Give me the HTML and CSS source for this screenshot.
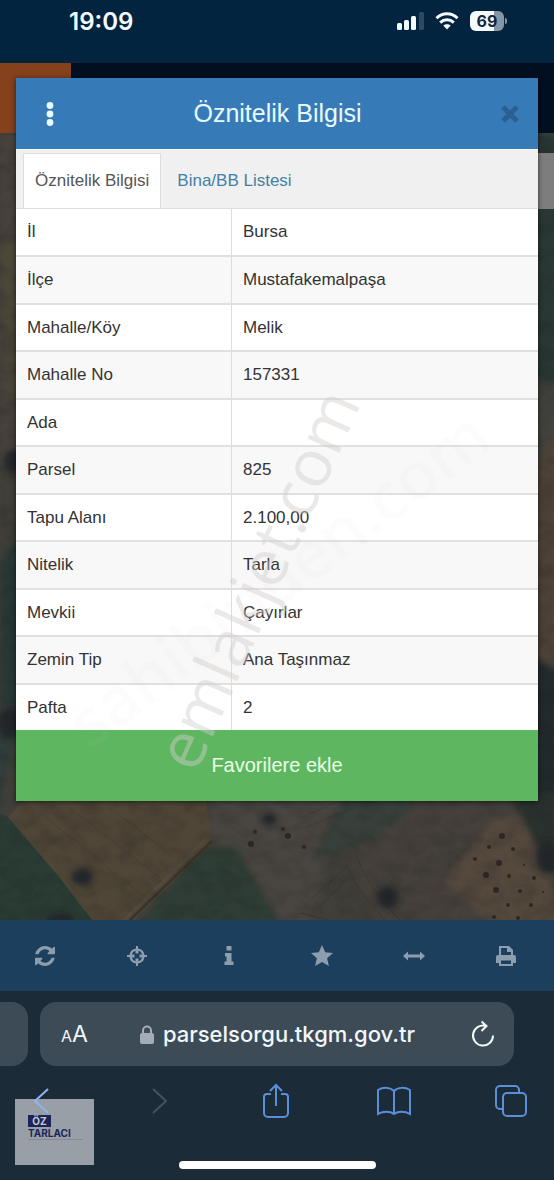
FILE: index.html
```html
<!DOCTYPE html>
<html lang="tr">
<head>
  <meta charset="UTF-8">
  <meta name="viewport" content="width=device-width, initial-scale=1">
  <title>Parsel Sorgu</title>
  <link rel="stylesheet" href="styles.css">
</head>
<body>
<div class="status">
  <span class="clock">19:09</span>
  <div class="status-icons">
    <svg width="27" height="18" viewBox="0 0 27 18">
      <g fill="#f4fbff">
        <rect x="0" y="11" width="5" height="7" rx="1.5"/>
        <rect x="7" y="8" width="5" height="10" rx="1.5"/>
        <rect x="14" y="4" width="5" height="14" rx="1.5"/>
      </g>
      <rect x="22" y="0" width="5" height="18" rx="1.5" fill="#2d4a60"/>
    </svg>
    <svg width="24" height="18" viewBox="0 0 24 18" fill="none" stroke="#f4fbff">
      <path d="M1.5 6.2C7.3.4 16.7.4 22.5 6.2" stroke-width="3"/>
      <path d="M5.2 10.6C9.2 6.9 14.8 6.9 18.8 10.6" stroke-width="3"/>
      <path d="M8.3 13.6C10.4 11.7 13.6 11.7 15.7 13.6L12 17.6Z" fill="#f4fbff" stroke="none"/>
    </svg>
    <div class="battery"><span>69</span></div>
  </div>
</div>

<div class="stage">
  <svg class="map" viewBox="0 0 554 857" preserveAspectRatio="xMidYMax slice" aria-hidden="true">
    <defs>
      <filter id="soft"><feGaussianBlur stdDeviation="3"/></filter>
      <filter id="soil" x="0" y="0" width="100%" height="100%" color-interpolation-filters="sRGB">
        <feTurbulence type="fractalNoise" baseFrequency="0.05 0.07" numOctaves="4" seed="7"/>
        <feColorMatrix values="0 0 0 0 0.12  0 0 0 0 0.12  0 0 0 0 0.12  1.6 0 0 0 -0.6"/>
      </filter>
    </defs>
    <rect width="554" height="857" fill="#413f39"/>
    <g filter="url(#soft)">
      <!-- left edge -->
      <path d="M0 70H20V400H0Z" fill="#48433b"/>
      <path d="M0 180H20V400L8 300Z" fill="#4d4739"/>
      <path d="M0 410L20 405V650L0 640Z" fill="#283735"/>
      <path d="M0 400L20 400V470L0 500Z" fill="#3f4038"/>
      <!-- right edge -->
      <path d="M530 70H560V320H530Z" fill="#2a3836"/>
      <path d="M530 330H560V380L530 400Z" fill="#43433e"/>
      <path d="M530 420L560 360V600H530Z" fill="#4d4337"/>
      <path d="M530 590L560 610V760H530Z" fill="#23292e"/>
      <path d="M0 655L16 668L-5 760Z" fill="#2e3e3a"/>
      <!-- fields under the dialog -->
      <path d="M212 730H350L330 800L310 860H280L240 790L205 776Z" fill="#484540"/>
      <path d="M420 730H345L310 800L400 765Z" fill="#37413b"/>
      <path d="M430 730H510L480 860H380L350 795Z" fill="#45413a"/>
      <path d="M495 755L525 750L548 800L560 860H490L445 818Z" fill="#54483e"/>
      <path d="M508 730H560V815L545 800Z" fill="#29332f"/>
      <path d="M200 788L235 782L262 830L282 862H138Z" fill="#2d3d36"/>
    </g>
    <path d="M0 750L8 754L60 815L92 857H0Z" fill="#2a3c34"/>
    <path d="M8 754L30 730H205L212 780L134 857H92L60 815Z" fill="#4f4637"/>
    <path d="M212 778L130 857" stroke="#3a352c" stroke-width="3"/>
    <path d="M206 776L124 857" stroke="#564c3e" stroke-width="2"/>
    <g fill="none" stroke="#35322c" stroke-opacity=".6">
      <path d="M310 838L350 800M318 845L345 817M300 850L330 857M345 800Q362 835 385 857M355 790Q370 830 400 857"/>
      <path d="M40 750L140 830M70 745L160 815M110 745L175 795M300 755L340 738M305 765L370 738" stroke-opacity=".3"/>
    </g>
    <g fill="#20252b" filter="url(#soft)">
      <ellipse cx="10" cy="660" rx="13" ry="16"/>
      <ellipse cx="82" cy="814" rx="11" ry="8"/>
      <ellipse cx="388" cy="834" rx="11" ry="11"/>
      <ellipse cx="548" cy="795" rx="12" ry="16"/>
      <ellipse cx="60" cy="856" rx="15" ry="6"/>
      <ellipse cx="269" cy="756" rx="7" ry="6"/>
      <ellipse cx="14" cy="398" rx="10" ry="12"/>
    </g>
    <g fill="#302725">
      <circle cx="502" cy="773" r="3"/><circle cx="489" cy="784" r="2"/><circle cx="513" cy="786" r="2"/>
      <circle cx="475" cy="796" r="2"/><circle cx="499" cy="800" r="3"/><circle cx="524" cy="802" r="1"/>
      <circle cx="486" cy="812" r="3"/><circle cx="509" cy="813" r="2"/><circle cx="534" cy="815" r="2"/>
      <circle cx="496" cy="827" r="3"/><circle cx="520" cy="828" r="2"/><circle cx="508" cy="842" r="2"/>
      <circle cx="531" cy="842" r="2"/><circle cx="543" cy="829" r="1"/><circle cx="494" cy="854" r="2"/>
      <circle cx="518" cy="855" r="2"/><circle cx="255" cy="769" r="2"/><circle cx="283" cy="766" r="2"/>
      <circle cx="288" cy="773" r="3"/><circle cx="251" cy="781" r="3"/><circle cx="304" cy="784" r="2"/>
    </g>
    <rect width="554" height="857" filter="url(#soil)" opacity=".3"/>
  </svg>
  <div class="site-head"></div>
  <div class="site-search"></div>

  <div class="dialog" role="dialog" aria-labelledby="dialog-title">
    <div class="dialog-head">
      <button type="button" class="menu" aria-label="Menü">
        <svg width="8" height="24" viewBox="0 0 8 24" fill="#e8fbff">
          <circle cx="4" cy="3.5" r="3.4"/><circle cx="4" cy="12" r="3.4"/><circle cx="4" cy="20.5" r="3.4"/>
        </svg>
      </button>
      <h1 id="dialog-title">Öznitelik Bilgisi</h1>
      <button type="button" class="close" aria-label="Kapat">
        <svg width="18" height="18" viewBox="0 0 18 18" stroke="#2b5f92" stroke-width="5">
          <path d="M2 2L16 16M16 2L2 16"/>
        </svg>
      </button>
    </div>
    <div class="tabs">
      <a href="#oznitelik" class="active">Öznitelik Bilgisi</a>
      <a href="#bina">Bina/BB Listesi</a>
    </div>
    <table class="info" id="oznitelik">
      <tr><th scope="row">İl</th><td>Bursa</td></tr>
      <tr><th scope="row">İlçe</th><td>Mustafakemalpaşa</td></tr>
      <tr><th scope="row">Mahalle/Köy</th><td>Melik</td></tr>
      <tr><th scope="row">Mahalle No</th><td>157331</td></tr>
      <tr><th scope="row">Ada</th><td></td></tr>
      <tr><th scope="row">Parsel</th><td>825</td></tr>
      <tr><th scope="row">Tapu Alanı</th><td>2.100,00</td></tr>
      <tr><th scope="row">Nitelik</th><td>Tarla</td></tr>
      <tr><th scope="row">Mevkii</th><td>Çayırlar</td></tr>
      <tr><th scope="row">Zemin Tip</th><td>Ana Taşınmaz</td></tr>
      <tr><th scope="row">Pafta</th><td>2</td></tr>
    </table>
    <button type="button" class="favorite">Favorilere ekle</button>
    <svg class="watermark" viewBox="0 0 522 722" aria-hidden="true">
      <text class="mark-main" transform="translate(180 696) rotate(-66)">emlakjet.com</text>
      <text class="mark-faint" transform="translate(74 672) rotate(-37)">sahibinden.com</text>
    </svg>
  </div>
</div>

<div class="toolbar">
  <button type="button" aria-label="Yenile">
    <svg width="20" height="20" viewBox="0 0 1536 1536"><path d="M1511 928q0 5-1 7-64 268-268 434.500T764 1536q-146 0-282.500-55T238 1324l-129 129q-19 19-45 19t-45-19-19-45V960q0-26 19-45t45-19h448q26 0 45 19t19 45-19 45l-137 137q71 66 161 102t187 36q134 0 250-65t186-179q11-17 53-117 8-23 30-23h192q13 0 22.500 9.500t9.500 22.500zm25-800v448q0 26-19 45t-45 19h-448q-26 0-45-19t-19-45 19-45l138-138Q969 256 768 256q-134 0-250 65T332 500q-11 17-53 117-8 23-30 23H50q-13 0-22.500-9.500T18 608v-7q65-268 270-434.500T768 0q146 0 284 55.500T1297 212l130-129q19-19 45-19t45 19 19 45z"/></svg>
  </button>
  <button type="button" aria-label="Konum">
    <svg width="20" height="20" viewBox="0 0 20 20"><path d="M9 0h2v2.500a7.500 7.500 0 0 1 6.500 6.500h2.500v2h-2.500a7.500 7.500 0 0 1-6.500 6.500v2.500H9v-2.500a7.500 7.500 0 0 1-6.500-6.500H0V9h2.500a7.500 7.500 0 0 1 6.500-6.500zM8.500 4.800a5.500 5.500 0 0 0-3.700 3.700h2.700v3H4.800a5.500 5.500 0 0 0 3.700 3.700v-2.700h3v2.700a5.500 5.500 0 0 0 3.700-3.700h-2.700v-3h2.700a5.500 5.500 0 0 0-3.700-3.700v2.700h-3z"/></svg>
  </button>
  <button type="button" aria-label="Bilgi">
    <svg width="10" height="20" viewBox="0 0 10 20"><path d="M2.500 0h5v4.500h-5zM1 7h6.500v8.500H9.500V19H.5v-3.500h2v-5H1z"/></svg>
  </button>
  <button type="button" aria-label="Favoriler">
    <svg width="22" height="22" viewBox="0 0 22 22"><path d="M11 0l3.200 7.300 7.800.8-5.900 5.200 1.800 7.700L11 17l-6.900 4 1.800-7.700L0 8.100l7.800-.8z"/></svg>
  </button>
  <button type="button" aria-label="Ölçüm">
    <svg width="22" height="10" viewBox="0 0 22 10"><path d="M0 5L5 .5V3.500H17V.5L22 5l-5 4.500V6.500H5v3z"/></svg>
  </button>
  <button type="button" aria-label="Yazdır">
    <svg width="20" height="20" viewBox="0 0 20 20"><path fill-rule="evenodd" d="M3 0h10l4 4v5h1a2 2 0 0 1 2 2v6h-3v3H3v-3H0v-6a2 2 0 0 1 2-2h1zM5 2v7h10V6h-4V2zM5 14.500v3.500h10v-3.500z"/></svg>
  </button>
</div>

<div class="browser">
  <div class="address-row">
    <div class="prev-tab"></div>
    <div class="address">
      <button type="button" class="text-size" aria-label="Metin boyutu"><small>A</small>A</button>
      <label class="url">
        <svg width="14" height="19" viewBox="0 0 14 19">
          <path d="M3 9V5.500a4 4 0 0 1 8 0V9" fill="none" stroke="#a3adb9" stroke-width="2"/>
          <rect y="8" width="14" height="11" rx="2" fill="#a3adb9"/>
        </svg>
        <input type="text" value="parselsorgu.tkgm.gov.tr" aria-label="Adres">
      </label>
      <button type="button" aria-label="Sayfayı yenile">
        <svg width="24" height="28" viewBox="0 0 24 28" fill="none" stroke="#f1f8fb" stroke-width="2">
          <path d="M15 6A10 10 0 1 0 22 15.500M10.500 1.500L15.500 6L10.500 11"/>
        </svg>
      </button>
    </div>
  </div>
  <div class="nav-row">
    <div class="agency">
      <div class="agency-top">ÖZ</div>
      <div class="agency-name">TARLACI</div>
      <div class="agency-line"></div>
    </div>
    <button type="button" aria-label="Geri">
      <svg width="16" height="28" viewBox="0 0 16 28" stroke="#8db6f0"><path d="M15 2L2 14L15 26"/></svg>
    </button>
    <button type="button" aria-label="İleri">
      <svg width="16" height="28" viewBox="0 0 16 28" stroke="#45535f"><path d="M2 2L15 14L2 26"/></svg>
    </button>
    <button type="button" aria-label="Paylaş">
      <svg width="28" height="36" viewBox="0 0 28 36"><path d="M9 11H5a3 3 0 0 0-3 3v16a4 4 0 0 0 4 4h16a4 4 0 0 0 4-4V14a3 3 0 0 0-3-3h-4M14 23V2M8 8L14 2L20 8"/></svg>
    </button>
    <button type="button" aria-label="Yer imleri">
      <svg width="34" height="30" viewBox="0 0 34 30"><path d="M17 5V28M17 5C13 1 6 1 1 4V28C6 25 13 25 17 28C21 25 28 25 33 28V4C28 1 21 1 17 5Z"/></svg>
    </button>
    <button type="button" aria-label="Sekmeler">
      <svg width="32" height="32" viewBox="0 0 32 32"><rect x="8" y="8" width="23" height="23" rx="4"/><path d="M8 24H5a4 4 0 0 1-4-4V5a4 4 0 0 1 4-4h15a4 4 0 0 1 4 4v3"/></svg>
    </button>
  </div>
  <div class="home-bar"></div>
</div>
</body>
</html>
```
FILE: styles.css
```css
* {
  margin: 0;
  padding: 0;
  box-sizing: border-box;
}
body {
  min-height: 100vh;
  display: flex;
  flex-direction: column;
  background: #1c2b38;
  font-family: "Liberation Sans", Arial, sans-serif;
  font-size: 17px;
  color: #333;
}
button {
  border: 0;
  background: none;
  font-family: inherit;
  cursor: pointer;
}
svg {
  display: block;
}

/* status bar */
.status {
  display: flex;
  justify-content: space-between;
  align-items: flex-start;
  height: 63px;
  padding: 8px 50px 0 69px;
  background: #03243e;
}
.clock {
  font-family: Inter, sans-serif;
  font-size: 24px;
  font-weight: 600;
  line-height: 28px;
  color: #f4fbff;
}
.status-icons {
  display: flex;
  align-items: center;
  gap: 11px;
  padding-top: 3px;
}
.battery {
  position: relative;
  width: 34px;
  height: 20px;
  border-radius: 6px;
  background: linear-gradient(90deg, #f4fbff 70%, #8796a3 70%);
  font-family: Inter, sans-serif;
  font-size: 16px;
  font-weight: 700;
  line-height: 20px;
  text-align: center;
  color: #12283a;
}
.battery::after {
  content: "";
  position: absolute;
  right: -3px;
  top: 7px;
  width: 2px;
  height: 6px;
  border-radius: 0 2px 2px 0;
  background: #8796a3;
}

/* map and dialog */
.stage {
  position: relative;
  flex: 1;
  padding: 15px 16px 119px;
  overflow: hidden;
  background: #403f39;
}
.map {
  position: absolute;
  left: 0;
  top: 0;
  width: 100%;
  height: 100%;
}
.site-head {
  position: absolute;
  left: 0;
  right: 0;
  top: 0;
  height: 70px;
  background: linear-gradient(90deg, #85401c 71px, #010f20 71px);
}
.site-search {
  position: absolute;
  right: 0;
  top: 90px;
  width: 40px;
  height: 56px;
  background: #7d7d7d;
}
.dialog {
  position: relative;
  background: #fff;
  box-shadow: 0 1px 5px rgba(0,0,0,.6);
}
.dialog-head {
  display: flex;
  align-items: center;
  justify-content: space-between;
  height: 71px;
  padding: 0 19px 0 30px;
  background: #367ab7;
}
.dialog-head h1 {
  font-size: 25px;
  font-weight: normal;
  line-height: 29px;
  color: #e8fbff;
}
.tabs {
  display: flex;
  align-items: flex-end;
  height: 59px;
  padding-left: 7px;
  border-top: 1px solid #fff;
  background: #f0f0f0;
}
.tabs a {
  height: 55px;
  padding: 0 11px;
  border: 1px solid transparent;
  border-bottom: 0;
  line-height: 54px;
  color: #457fa6;
  text-decoration: none;
}
.tabs a + a {
  margin-left: 4px;
}
.tabs .active {
  border-color: #ddd;
  background: #fff;
  color: #555;
}
.info {
  width: 100%;
  border-spacing: 0;
  table-layout: fixed;
}
.info tr {
  height: 47px;
}
.info tr:nth-child(even) {
  height: 48px;
  background: #f8f8f8;
}
.info th, .info td {
  padding: 0 11px;
  border-top: 2px solid #e0e0e0;
  font-weight: normal;
  text-align: left;
}
.info tr:first-child th, .info tr:first-child td {
  border-top: 1px solid #ddd;
}
.info th {
  width: 216px;
  border-right: 1px solid #ddd;
}
.favorite {
  display: block;
  width: 100%;
  height: 71px;
  background: #5eb760;
  font-size: 20px;
  color: #e9ffe6;
}
.watermark {
  position: absolute;
  left: 0;
  top: 0;
  width: 100%;
  height: 100%;
  pointer-events: none;
}
.watermark text {
  font-family: "Open Sans", sans-serif;
}
.mark-main {
  font-size: 65px;
  fill: rgba(210,205,205,.45);
}
.mark-faint {
  font-size: 66px;
  font-weight: 600;
  fill: rgba(190,190,190,.05);
}

/* site toolbar */
.toolbar {
  display: flex;
  height: 71px;
  background: #1c3f5e;
}
.toolbar button {
  flex: 1;
  display: flex;
  align-items: center;
  justify-content: center;
  padding-right: 3px;
}
.toolbar svg {
  fill: #8c9dae;
}

/* browser bar */
.browser {
  padding: 11px 0;
}
.address-row {
  display: flex;
  gap: 12px;
  padding-right: 40px;
}
.prev-tab {
  width: 28px;
  height: 64px;
  border-radius: 0 16px 16px 0;
  background: #3d4b57;
}
.address {
  flex: 1;
  display: flex;
  align-items: center;
  justify-content: space-between;
  height: 64px;
  padding: 0 19px 0 21px;
  border-radius: 16px;
  background: #3d4b57;
}
.text-size {
  font-family: Inter, sans-serif;
  font-size: 23px;
  color: #f1f8fb;
}
.text-size small {
  font-size: 16px;
}
.url {
  display: flex;
  align-items: center;
  gap: 9px;
}
.url input {
  width: 256px;
  border: 0;
  outline: 0;
  background: none;
  font-family: Inter, sans-serif;
  font-size: 22px;
  font-weight: 500;
  color: #f1f8fb;
}
.nav-row {
  position: relative;
  display: flex;
  align-items: center;
  justify-content: space-between;
  height: 70px;
  padding: 0 26px 0 24px;
}
.nav-row button {
  position: relative;
  display: flex;
  justify-content: center;
  width: 34px;
}
.nav-row svg {
  fill: none;
  stroke-width: 2;
}
.nav-row svg:not([stroke]) {
  stroke: #5b8fd8;
}
.agency {
  position: absolute;
  left: 15px;
  top: 33px;
  width: 79px;
  height: 66px;
  padding: 16px 13px;
  background: #989fa6;
  font-family: Inter, sans-serif;
  font-weight: 700;
  color: #1c2559;
}
.agency-top {
  width: 23px;
  background: #1c2559;
  font-size: 10px;
  line-height: 12px;
  text-align: center;
  color: #c4c9d2;
}
.agency-name {
  font-size: 10px;
  line-height: 12px;
}
.agency-line {
  width: 55px;
  height: 1px;
  background: #858b96;
}
.home-bar {
  width: 197px;
  height: 8px;
  margin: 25px auto 0;
  border-radius: 4px;
  background: #fff;
}
```
